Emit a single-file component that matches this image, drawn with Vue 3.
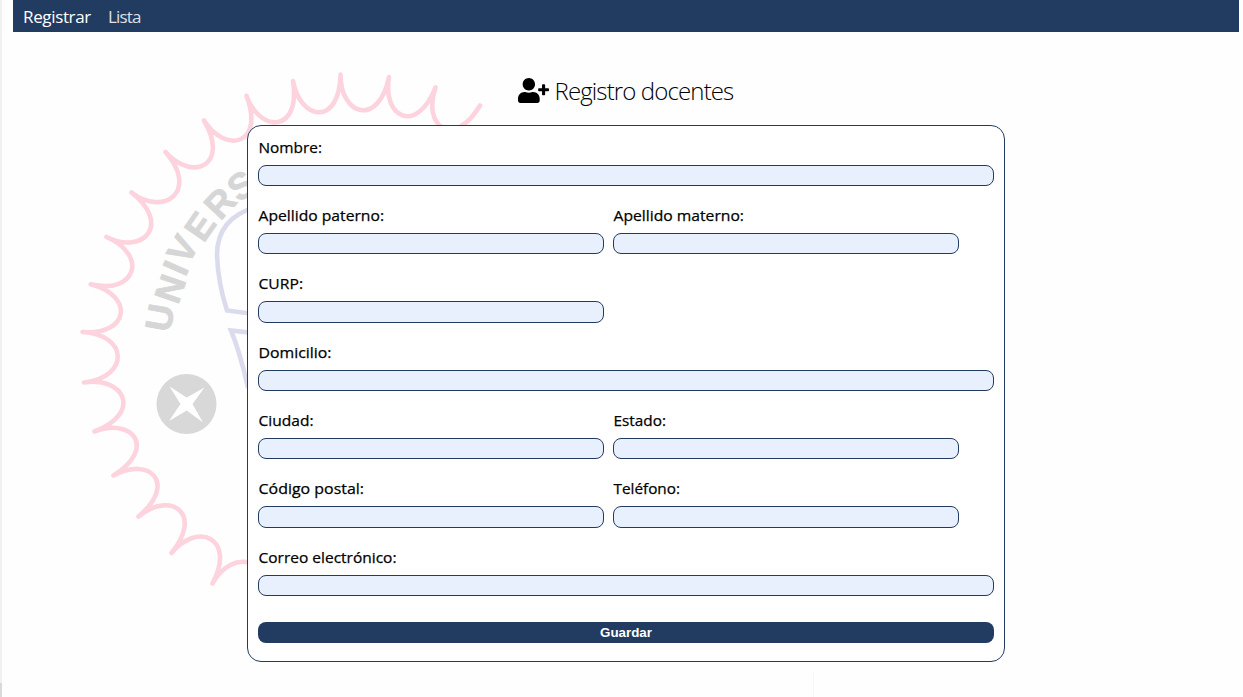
<script setup>
const rows = [
  [{ id: 'nombre', label: 'Nombre:', w: 64, wide: true }],
  [{ id: 'paterno', label: 'Apellido paterno:', w: 126 }, { id: 'materno', label: 'Apellido materno:', w: 131 }],
  [{ id: 'curp', label: 'CURP:', w: 45 }],
  [{ id: 'domicilio', label: 'Domicilio:', w: 73.5, wide: true }],
  [{ id: 'ciudad', label: 'Ciudad:', w: 55.5 }, { id: 'estado', label: 'Estado:', w: 53 }],
  [{ id: 'cp', label: 'Código postal:', w: 106 }, { id: 'telefono', label: 'Teléfono:', w: 67 }],
  [{ id: 'correo', label: 'Correo electrónico:', w: 138.5, wide: true }],
]

const tips = [
  [262, 607], [212.5, 583.5], [171.5, 553], [138.5, 516.5], [113.5, 475.5], [94.5, 431.5], [84, 382.5],
  [82.5, 332], [90.7, 284.3], [106.5, 237], [131.5, 192.5], [165.5, 152], [204, 120.5],
  [246.5, 96], [293, 81], [340.5, 74.5], [389, 77], [435.5, 87.5], [480, 105.5],
]

// Scalloped edge of the seal, one cubic bowl between each pair of tips
const edge = tips.slice(1).reduce((d, p, i) => {
  const [x0, y0] = tips[i]
  const len = Math.hypot(p[0] - x0, p[1] - y0)
  const ux = (p[0] - x0) / len
  const uy = (p[1] - y0) / len
  const at = (x, y, a, n) => `${(x + ux * a - uy * n).toFixed(1)} ${(y + uy * a + ux * n).toFixed(1)}`
  const [a, n, b, m] = i < 6 ? [8, 51, -2, 41] : i < 9 ? [4, 46, -4, 46] : [2, 41, -8, 51]
  return `${d} C${at(x0, y0, a, n)} ${at(p[0], p[1], b, m)} ${p[0]} ${p[1]}`
}, `M${tips[0].join(' ')}`)

const letters = [
  ['U', 159, 317.5, -80], ['N', 169.5, 288.5, -71], ['I', 175, 267.5, -66], ['V', 182, 249, -61],
  ['E', 199.5, 226, -55], ['R', 219.5, 202.5, -47], ['S', 241, 185, -36],
]
</script>

<template>
  <div class="page">
    <svg class="seal" width="520" height="640" viewBox="0 0 520 640" aria-hidden="true">
      <path class="edge" :d="edge" />
      <text
        v-for="l in letters"
        :key="l[0]"
        class="letter"
        text-anchor="middle"
        :transform="`translate(${l[1]} ${l[2]}) rotate(${l[3]})`"
        y="13.5"
      >{{ l[0] }}</text>
      <circle cx="186.5" cy="404" r="30" fill="#d8d8d8" />
      <path d="M169.500 386.500L186.700 397.500L204.500 387.500L192.500 404L203 422.500L186.700 410.500L169 421L180.500 404Z" fill="#fff" />
      <path class="shield" d="M260 206Q217 216 217 255Q218 283 227 310.500L262 315M262 334L231 330.500Q240 352 248 388" />
    </svg>

    <nav class="nav">
      <a class="active">Registrar</a>
      <a class="second">Lista</a>
    </nav>

    <h1 class="title">
      <svg width="31" height="25" viewBox="0 0 640 512" aria-hidden="true">
        <path d="M624 208h-64v-64c0-8.800-7.200-16-16-16h-32c-8.800 0-16 7.200-16 16v64h-64c-8.800 0-16 7.200-16 16v32c0 8.800 7.200 16 16 16h64v64c0 8.800 7.200 16 16 16h32c8.800 0 16-7.200 16-16v-64h64c8.800 0 16-7.200 16-16v-32c0-8.800-7.200-16-16-16zm-400 48c70.700 0 128-57.300 128-128S294.700 0 224 0 96 57.300 96 128s57.300 128 128 128zm89.600 32h-16.700c-22.200 10.200-46.900 16-72.900 16s-50.600-5.800-72.900-16h-16.700C60.200 288 0 348.200 0 422.400V464c0 26.500 21.500 48 48 48h352c26.500 0 48-21.500 48-48v-41.600c0-74.200-60.200-134.400-134.400-134.400z" />
      </svg>
      <span>Registro docentes</span>
    </h1>

    <form class="card" @submit.prevent>
      <div v-for="row in rows" :key="row[0].id" class="row">
        <div v-for="f in row" :key="f.id" class="field" :class="{ wide: f.wide }">
          <label :for="f.id">
            <svg class="label" :width="f.w + 4" height="21" overflow="visible">
              <text x="0.500" y="16" :textLength="f.w - 0.5" lengthAdjust="spacingAndGlyphs">{{ f.label }}</text>
            </svg>
          </label>
          <input :id="f.id" type="text" />
        </div>
      </div>
      <button>Guardar</button>
    </form>
    <i class="tick"></i>
  </div>
</template>

<style>
body { background: #fefefe; }
</style>

<style scoped>
.page {
  position: relative;
  box-sizing: border-box;
  height: 697px;
  padding: 0 4px 0 13px;
  overflow: hidden;
  background: linear-gradient(#f1f1f1 683px, #dadada 683px) 0 0 / 2px 100% no-repeat #fefefe;
  font-family: "Open Sans", "Noto Sans", sans-serif;
  color: #000;
}
.seal { position: absolute; left: 0; top: 0; }
.edge { fill: none; stroke: #fdd3de; stroke-width: 4.6; stroke-linejoin: round; stroke-linecap: round; }
.shield { fill: none; stroke: #dbdbee; stroke-width: 4.6; }
.letter {
  font: bold 37px "Liberation Sans", Arial, sans-serif;
  fill: #d6d6d6;
  stroke: #d6d6d6;
  stroke-width: 0.7;
  stroke-linejoin: round;
}
.nav {
  position: relative;
  display: flex;
  gap: 16px;
  height: 32px;
  padding-left: 10px;
  background: #223b60;
  color: #fff;
  font-size: 17px;
  line-height: 33px;
}
.nav a { width: 69px; letter-spacing: -0.35px; white-space: nowrap; }
.nav .second { width: auto; color: #dce1e8; letter-spacing: -0.85px; }
.title {
  position: relative;
  display: flex;
  align-items: center;
  height: 36px;
  margin: 40px 0 0 505px;
  font-size: 24px;
  font-weight: 300;
  line-height: 36px;
  letter-spacing: -0.87px;
}
.title span { margin: 1px 0 0 5.5px; white-space: nowrap; }
.title svg { margin-top: 1px; }
.card {
  position: relative;
  box-sizing: border-box;
  width: 758px;
  height: 537px;
  margin: 17px 0 0 234px;
  padding: 10.8px 10px 0;
  border: 1px solid #223b60;
  border-radius: 14px;
  background: #fff;
}
.row { display: flex; gap: 9px; height: 68.3px; }
.field { width: 346px; }
.field.wide { width: 736px; }
label { display: block; height: 21px; margin-bottom: 7px; }
.label { display: block; font-size: 15.3px; stroke: #000; stroke-width: 0.25px; }
input {
  display: block;
  box-sizing: border-box;
  width: 100%;
  height: 21.33px;
  padding: 1px 6px;
  border: 1px solid #223b60;
  border-radius: 8px;
  outline: 0;
  background: #e8effd;
}
button {
  display: block;
  width: 736px;
  height: 21px;
  margin-top: 7.1px;
  padding: 0;
  border: 0;
  border-radius: 8px;
  background: #223b60;
  color: #fff;
  font: bold 13.33px/21px "Liberation Sans", Arial, sans-serif;
}
.tick { position: absolute; left: 813px; bottom: 0; width: 1px; height: 25px; background: #f7f7f7; }
</style>
